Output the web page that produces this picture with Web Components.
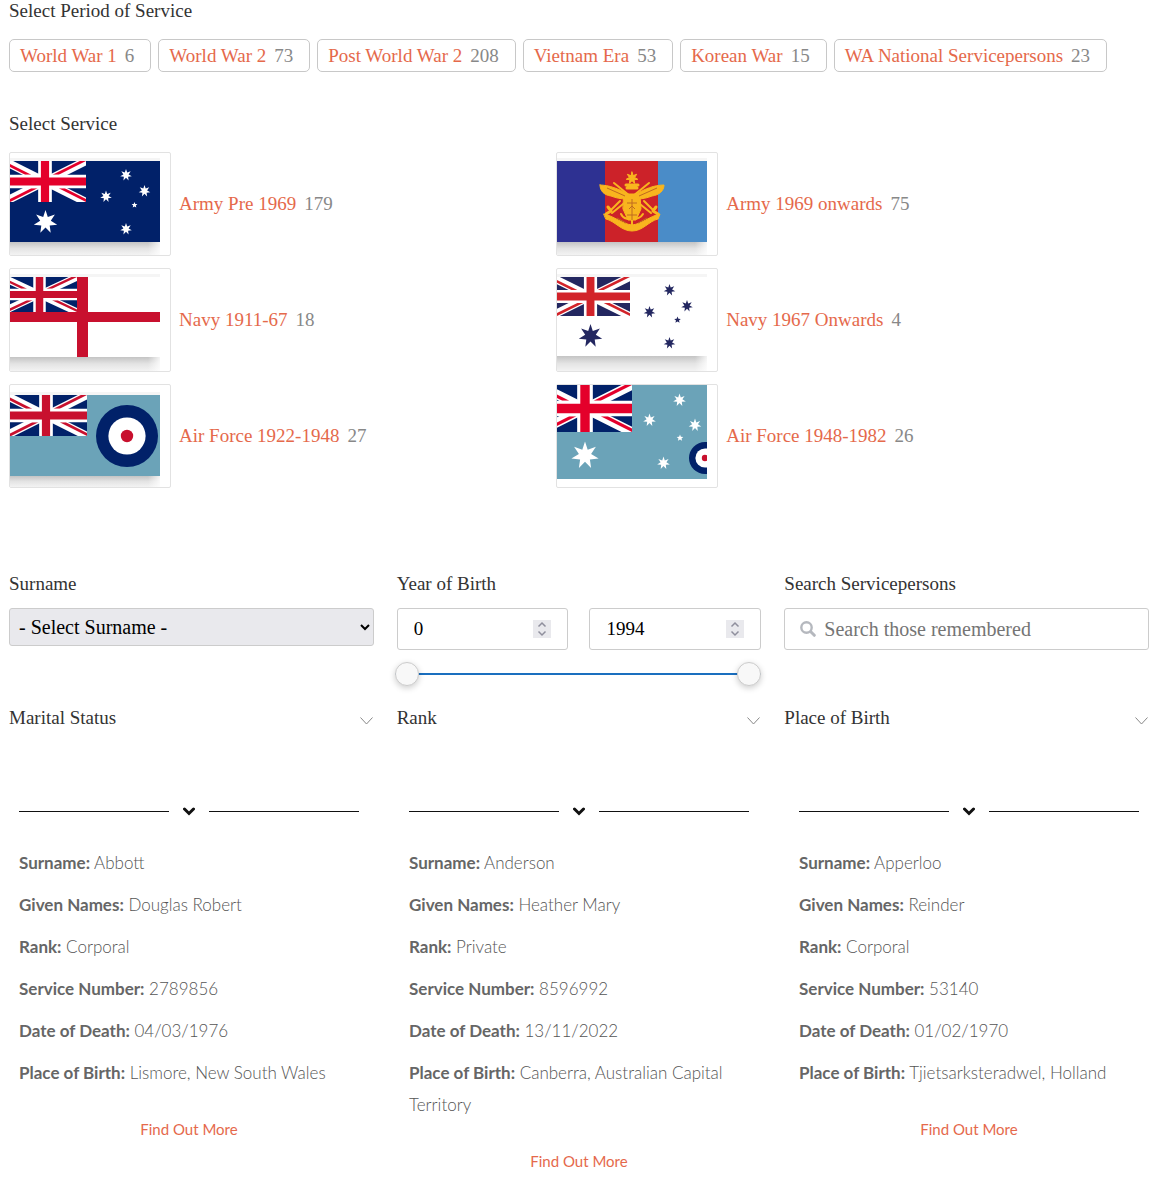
<!DOCTYPE html>
<html lang="en">
<head>
  <meta charset="utf-8">
  <meta name="viewport" content="width=device-width, initial-scale=1">
  <title>Servicepersons</title>
  <style>
    body {
      margin: 0 13px 0 9px;
      background: #fff;
      color: #333;
      font-family: "Liberation Serif", serif;
      font-size: 19px;
      line-height: 22px;
    }
  </style>
</head>
<body>
  <roll-page></roll-page>

  <script>
    // points of a star with its first point straight up
    function star (cx, cy, r, points = 7, inner = 0.45) {
      const list = []
      for (let i = 0; i < points * 2; i++) {
        const radius = i % 2 ? r * inner : r
        const angle = Math.PI * i / points - Math.PI / 2
        list.push(`${(cx + radius * Math.cos(angle)).toFixed(1)},${(cy + radius * Math.sin(angle)).toFixed(1)}`)
      }
      return `<polygon points="${list.join(' ')}"/>`
    }

    function unionJack (x, y, width, height, blue, red) {
      return `
        <svg x="${x}" y="${y}" width="${width}" height="${height}" viewBox="0 0 60 30" preserveAspectRatio="none">
          <path fill="${blue}" d="M0 0h60v30H0z"/>
          <path stroke="#fff" stroke-width="6" d="M0 0l60 30M60 0L0 30"/>
          <path fill="${red}" d="M0 0l20 10h-4.500L0 2.200zM60 0L40 10h-4.500L55.500 0zM0 30l20-10h4.500L4.500 30zM60 30L40 20h4.500L60 27.800z"/>
          <path stroke="#fff" stroke-width="10" d="M30 0v30M0 15h60"/>
          <path stroke="${red}" stroke-width="6" d="M30 0v30M0 15h60"/>
        </svg>`
    }

    function roundel (cx, cy, r) {
      return `
        <circle cx="${cx}" cy="${cy}" r="${r}" fill="#012169"/>
        <circle cx="${cx}" cy="${cy}" r="${r * 0.6}" fill="#fff"/>
        <circle cx="${cx}" cy="${cy}" r="${r * 0.2}" fill="#c8102e"/>`
    }

    const emblem = `
      <g fill="#f9b51e" stroke="#f9b51e" stroke-linecap="round" stroke-linejoin="round">
        ${star(75, 25, 6)}
        <path stroke-width="3" d="M69 32h12M70 35h10"/>
        <path fill="none" stroke-width="2" d="M57 30l37 30M92 30L55 60"/>
        <path stroke-width="1" d="M43 32c9 0 19 4 28 9h8c9-5 18-9 28-9c0 6-5 10-12 11c-5 2-10 3-15 3l-5 5l-5-5c-6 0-11-1-16-3c-7-1-11-5-11-11z"/>
        <path stroke-width="1" d="M67 43h16l1 13l-5 11h-8l-5-11z"/>
        <path fill="none" stroke-width="2" d="M75 44v29M64 61c3 7 18 7 22 0M63 48l-10 10M87 48l10 10"/>
        <path stroke-width="1" d="M47 61c10 2 18 10 28 11c10-1 18-9 28-11l-2 5c-9 2-15 12-26 12s-17-10-26-12z"/>
        <path fill="none" stroke-width="3" d="M51 54l3 4l-5 3M99 54l-3 4l5 3"/>
      </g>
      <path fill="none" stroke="#bf6a20" stroke-width="1" d="M50 35l18 8M100 35l-18 8M70 50h10M72 56l3-3l3 3M70 62h10M75 46v21M60 65l9 5M90 65l-9 5"/>`

    const flags = {
      'army-1901': {
        top: 8,
        bottom: 89,
        art: `<path fill="#012169" d="M0 8h150v81H0z"/>
          ${unionJack(-6, 8, 82, 41, '#012169', '#e4002b')}
          <g fill="#fff">${star(35.5, 69, 12)}${star(116, 22, 6)}${star(96, 43.5, 6)}${star(134.5, 38, 6)}${star(116, 76, 6)}${star(124.5, 52, 3, 5)}</g>`
      },
      'army-1969': {
        top: 8,
        bottom: 89,
        art: `<path fill="#2e3192" d="M0 8h48v81H0z"/>
          <path fill="#cc2229" d="M48 8h53v81H48z"/>
          <path fill="#4a8cc8" d="M101 8h49v81h-49z"/>
          ${emblem}`
      },
      'navy-1911': {
        top: 8,
        bottom: 88,
        art: `<path fill="#fff" d="M0 8h150v80H0z"/>
          ${unionJack(-8, 8, 75, 35, '#012169', '#c8102e')}
          <path fill="#c8102e" d="M67 8h11v35h72v10H78v35H67V53H0V43h67z"/>`
      },
      'navy-1967': {
        top: 8,
        bottom: 87,
        art: `<path fill="#fff" d="M0 8h150v79H0z"/>
          ${unionJack(-6, 8, 79, 39, '#232760', '#d2232a')}
          <g fill="#232760">${star(33.5, 67, 12)}${star(112.5, 21, 6)}${star(130, 37, 6)}${star(92.5, 43, 6)}${star(112.5, 74, 6)}${star(120.5, 51, 3.5, 5)}</g>`
      },
      'air-1922': {
        top: 10,
        bottom: 91,
        art: `<path fill="#6ba3b8" d="M0 10h150v81H0z"/>
          ${unionJack(-5, 10, 82, 41, '#012169', '#c8102e')}
          ${roundel(117, 51, 31)}`
      },
      'air-1948': {
        top: 0,
        bottom: 0,
        art: `<path fill="#6ba3b8" d="M0 0h150v94H0z"/>
          ${unionJack(-19, 0, 94, 47, '#012169', '#e4002b')}
          <g fill="#fff">${star(28, 70.5, 14)}${star(122.5, 15, 6.5)}${star(92.5, 35, 6.5)}${star(138, 40, 6.5)}${star(106.5, 78, 6.5)}${star(123, 53, 3.5, 5)}</g>
          ${roundel(148, 73, 16)}`
      }
    }

    class ServiceFlag extends HTMLElement {
      constructor () {
        super()
        this.shadow = this.attachShadow({ mode: 'open' })
      }

      connectedCallback () {
        this.render()
      }

      render () {
        const flag = flags[this.getAttribute('name')]
        const shadow = flag.top
          ? `<path fill="#f5f5f5" d="M0 ${flag.top - 3}h150v3H0z"/>
             <path fill="url(#fade)" d="M0 ${flag.bottom}h150v${102 - flag.bottom}H0z"/>
             <path fill="url(#edge)" d="M138 ${flag.bottom}h12v${102 - flag.bottom}h-12z"/>`
          : ''

        this.shadow.innerHTML =
        /*html*/`
        <style>
          :host {
            display: block;
            flex: none;
            padding-right: 10px;
            border: 1px solid #e2e2e2;
            border-radius: 2px;
            background: #fff;
          }
          svg {
            display: block;
          }
        </style>
        <svg width="150" height="102" viewBox="0 0 150 102" fill="none" aria-hidden="true">
          <defs>
            <linearGradient id="fade" x2="0" y2="1">
              <stop stop-color="#c4c4c4"/>
              <stop offset=".5" stop-color="#e4e4e4"/>
              <stop offset="1" stop-color="#f3f3f3"/>
            </linearGradient>
            <linearGradient id="edge">
              <stop stop-color="#fff" stop-opacity="0"/>
              <stop offset="1" stop-color="#fff" stop-opacity=".8"/>
            </linearGradient>
          </defs>
          ${shadow}
          ${flag.art}
        </svg>
        `
      }
    }

    class FacetSection extends HTMLElement {
      constructor () {
        super()
        this.shadow = this.attachShadow({ mode: 'open' })
      }

      connectedCallback () {
        this.shadow.innerHTML =
        /*html*/`
        <style>
          :host {
            display: block;
          }
          h2 {
            margin: 0 0 17px;
            font: inherit;
          }
        </style>
        <h2>${this.getAttribute('heading')}</h2>
        <slot></slot>
        `
      }
    }

    class PeriodButton extends HTMLElement {
      constructor () {
        super()
        this.shadow = this.attachShadow({ mode: 'open' })
      }

      connectedCallback () {
        this.shadow.innerHTML =
        /*html*/`
        <style>
          :host {
            display: block;
          }
          button {
            display: flex;
            gap: 8px;
            height: 33px;
            padding: 0 16px 0 10px;
            align-items: center;
            border: 1px solid #c8c8c8;
            border-radius: 5px;
            background: #fff;
            color: #e5694b;
            font: inherit;
            white-space: nowrap;
            cursor: pointer;
          }
          .count {
            color: #888;
          }
        </style>
        <button type="button"><slot></slot><span class="count">${this.getAttribute('count')}</span></button>
        `
      }
    }

    class ServiceOption extends HTMLElement {
      constructor () {
        super()
        this.shadow = this.attachShadow({ mode: 'open' })
      }

      connectedCallback () {
        this.shadow.innerHTML =
        /*html*/`
        <style>
          :host {
            display: block;
          }
          button {
            display: flex;
            gap: 8px;
            padding: 0;
            align-items: center;
            border: 0;
            background: none;
            color: #e5694b;
            font: inherit;
            cursor: pointer;
          }
          .count {
            color: #888;
          }
        </style>
        <button type="button">
          <service-flag name="${this.getAttribute('flag')}"></service-flag>
          <slot></slot>
          <span class="count">${this.getAttribute('count')}</span>
        </button>
        `
      }
    }

    class SurnameSelect extends HTMLElement {
      constructor () {
        super()
        this.shadow = this.attachShadow({ mode: 'open' })
      }

      connectedCallback () {
        this.shadow.innerHTML =
        /*html*/`
        <style>
          :host {
            display: block;
          }
          label {
            display: block;
            margin-bottom: 13px;
          }
          select {
            display: block;
            box-sizing: border-box;
            width: 100%;
            height: 38px;
            padding: 0 5px;
            border: 1px solid #ccc;
            border-radius: 3px;
            background: #e9e9ed;
            color: #000;
            font: inherit;
            font-size: 20px;
          }
        </style>
        <label for="surname">Surname</label>
        <select id="surname">
          <option>- Select Surname -</option>
        </select>
        `
      }
    }

    class YearRange extends HTMLElement {
      constructor () {
        super()
        this.shadow = this.attachShadow({ mode: 'open' })
        this.min = 0
        this.max = 1994
      }

      connectedCallback () {
        this.render()
      }

      field (id, label, value) {
        return /*html*/`
          <div class="field">
            <input type="number" id="${id}" aria-label="${label}" min="${this.min}" max="${this.max}" value="${value}">
            <svg width="18" height="18" viewBox="0 0 18 18" fill="none" aria-hidden="true">
              <path fill="#e9e9ed" d="M0 0h18v18H0z"/>
              <path stroke="#8f8f9d" stroke-width="1.500" d="M5.500 6.500L9 3l3.500 3.500M5.500 11.500L9 15l3.500-3.500"/>
            </svg>
          </div>`
      }

      render () {
        this.shadow.innerHTML =
        /*html*/`
        <style>
          :host {
            display: block;
          }
          fieldset {
            min-width: 0;
            margin: 0;
            padding: 0;
            border: 0;
          }
          legend {
            margin-bottom: 13px;
            padding: 0;
          }
          .fields {
            display: grid;
            grid-template-columns: 1fr 1fr;
            gap: 21px;
          }
          .field {
            display: flex;
            box-sizing: border-box;
            min-width: 0;
            height: 42px;
            padding: 0 16px;
            align-items: center;
            border: 1px solid #ccc;
            border-radius: 3px;
          }
          .field svg {
            flex: none;
          }
          input[type="number"] {
            flex: 1;
            min-width: 0;
            padding: 0;
            border: 0;
            outline: 0;
            background: none;
            color: #000;
            font: inherit;
            appearance: textfield;
          }
          input[type="number"]::-webkit-inner-spin-button {
            appearance: none;
            margin: 0;
          }
          .slider {
            display: grid;
            height: 24px;
            margin: 12px 0 0 -2px;
            background: linear-gradient(#1a6fbf, #1a6fbf) center / 100% 2px no-repeat;
          }
          .slider input {
            grid-area: 1 / 1;
            width: 100%;
            height: 24px;
            margin: 0;
            appearance: none;
            background: none;
            pointer-events: none;
          }
          .slider input::-webkit-slider-thumb {
            appearance: none;
            box-sizing: border-box;
            width: 24px;
            height: 24px;
            border: 1px solid #ccc;
            border-radius: 50%;
            background: #f8f8f8;
            box-shadow: 0 2px 6px rgba(0, 0, 0, .2);
            pointer-events: auto;
          }
        </style>
        <fieldset>
          <legend>Year of Birth</legend>
          <div class="fields">
            ${this.field('from', 'From year', this.min)}
            ${this.field('to', 'To year', this.max)}
          </div>
          <div class="slider">
            <input type="range" aria-label="From year" min="${this.min}" max="${this.max}" value="${this.min}">
            <input type="range" aria-label="To year" min="${this.min}" max="${this.max}" value="${this.max}">
          </div>
        </fieldset>
        `
        // keep each number box and its thumb on the same value
        const numbers = this.shadow.querySelectorAll('input[type="number"]')
        const thumbs = this.shadow.querySelectorAll('input[type="range"]')
        thumbs.forEach((thumb, i) => {
          thumb.addEventListener('input', () => {
            numbers[i].value = thumb.value
          })
          numbers[i].addEventListener('input', () => {
            thumb.value = numbers[i].value
          })
        })
      }
    }

    class PersonSearch extends HTMLElement {
      constructor () {
        super()
        this.shadow = this.attachShadow({ mode: 'open' })
      }

      connectedCallback () {
        this.shadow.innerHTML =
        /*html*/`
        <style>
          :host {
            display: block;
          }
          label {
            display: block;
            margin-bottom: 13px;
          }
          .box {
            display: flex;
            gap: 8px;
            box-sizing: border-box;
            height: 42px;
            padding: 0 15px;
            align-items: center;
            border: 1px solid #ccc;
            border-radius: 3px;
          }
          svg {
            flex: none;
          }
          input {
            flex: 1;
            min-width: 0;
            padding: 0;
            border: 0;
            outline: 0;
            background: none;
            color: #000;
            font: inherit;
            font-size: 20px;
          }
          input::placeholder {
            color: #757575;
          }
        </style>
        <label for="search">Search Servicepersons</label>
        <div class="box">
          <svg width="16" height="16" viewBox="0 0 16 16" fill="none" stroke="#b5b8be" aria-hidden="true">
            <circle cx="6.500" cy="6.500" r="5.200" stroke-width="2.400"/>
            <path stroke-width="3" stroke-linecap="round" d="M10.800 10.800l3.500 3.500"/>
          </svg>
          <input type="text" id="search" placeholder="Search those remembered">
        </div>
        `
      }
    }

    class FacetToggle extends HTMLElement {
      constructor () {
        super()
        this.shadow = this.attachShadow({ mode: 'open' })
      }

      connectedCallback () {
        this.shadow.innerHTML =
        /*html*/`
        <style>
          :host {
            display: block;
          }
          button {
            display: flex;
            width: 100%;
            padding: 0;
            align-items: end;
            justify-content: space-between;
            border: 0;
            background: none;
            color: inherit;
            font: inherit;
            cursor: pointer;
          }
        </style>
        <button type="button" aria-expanded="false">
          <slot></slot>
          <svg width="14" height="14" viewBox="0 0 14 14" fill="none" stroke="#888" aria-hidden="true">
            <path d="M.5 2.500l6 6.500l6-6.500"/>
          </svg>
        </button>
        `
        const button = this.shadow.querySelector('button')
        button.addEventListener('click', () => {
          button.setAttribute('aria-expanded', button.getAttribute('aria-expanded') === 'false')
        })
      }
    }

    class PersonCard extends HTMLElement {
      constructor () {
        super()
        this.shadow = this.attachShadow({ mode: 'open' })
        this.person = {}
      }

      connectedCallback () {
        this.render()
      }

      render () {
        this.shadow.innerHTML =
        /*html*/`
        <style>
          :host {
            display: block;
            padding: 0 10px;
            color: #555;
            font-family: Lato, sans-serif;
            font-size: 17px;
            line-height: 32px;
          }
          .divider {
            display: grid;
            grid-template-columns: 1fr 12px 1fr;
            gap: 14px;
            height: 14px;
            margin-bottom: 29px;
            align-items: center;
          }
          .divider hr {
            width: 100%;
            margin: 0;
            border: 0;
            border-top: 1px solid #111;
          }
          p {
            margin: 0 0 10px;
            font-weight: 300;
          }
          b {
            color: #666;
            font-weight: 700;
          }
          a {
            display: block;
            width: fit-content;
            margin: 24px auto 0;
            color: #e5694b;
            font-size: 15px;
            text-decoration: none;
          }
        </style>
        <div class="divider">
          <hr>
          <svg width="12" height="12" viewBox="0 0 12 12" fill="none" stroke="#111" stroke-width="3" stroke-linecap="round" aria-hidden="true">
            <path d="M1.500 4L6 8.500L10.500 4"/>
          </svg>
          <hr>
        </div>
        ${Object.entries(this.person).map(([name, value]) => `<p><b>${name}:</b> ${value}</p>`).join('')}
        <a href="#">Find Out More</a>
        `
      }
    }

    class PersonList extends HTMLElement {
      constructor () {
        super()
        this.shadow = this.attachShadow({ mode: 'open' })
        this.people = [
          {
            'Surname': 'Abbott',
            'Given Names': 'Douglas Robert',
            'Rank': 'Corporal',
            'Service Number': '2789856',
            'Date of Death': '04/03/1976',
            'Place of Birth': 'Lismore, New South Wales'
          },
          {
            'Surname': 'Anderson',
            'Given Names': 'Heather Mary',
            'Rank': 'Private',
            'Service Number': '8596992',
            'Date of Death': '13/11/2022',
            'Place of Birth': 'Canberra, Australian Capital Territory'
          },
          {
            'Surname': 'Apperloo',
            'Given Names': 'Reinder',
            'Rank': 'Corporal',
            'Service Number': '53140',
            'Date of Death': '01/02/1970',
            'Place of Birth': 'Tjietsarksteradwel, Holland'
          }
        ]
      }

      connectedCallback () {
        this.shadow.innerHTML =
        /*html*/`
        <style>
          :host {
            display: grid;
            grid-template-columns: repeat(3, minmax(0, 1fr));
            gap: 30px;
          }
        </style>
        `
        this.people.forEach((person) => {
          const card = document.createElement('person-card')
          card.person = person
          this.shadow.appendChild(card)
        })
      }
    }

    class RollPage extends HTMLElement {
      constructor () {
        super()
        this.shadow = this.attachShadow({ mode: 'open' })
      }

      connectedCallback () {
        this.shadow.innerHTML =
        /*html*/`
        <style>
          :host {
            display: block;
          }
          .periods {
            display: flex;
            flex-wrap: wrap;
            gap: 7px;
            margin-bottom: 41px;
          }
          .services {
            display: grid;
            grid-template-columns: 48% 48%;
            row-gap: 12px;
            margin-bottom: 85px;
          }
          .filters {
            display: grid;
            grid-template-columns: repeat(3, minmax(0, 1fr));
            gap: 21px 23px;
            margin-bottom: 75px;
          }
        </style>
        <main>
          <facet-section heading="Select Period of Service">
            <div class="periods">
              <period-button count="6">World War 1</period-button>
              <period-button count="73">World War 2</period-button>
              <period-button count="208">Post World War 2</period-button>
              <period-button count="53">Vietnam Era</period-button>
              <period-button count="15">Korean War</period-button>
              <period-button count="23">WA National Servicepersons</period-button>
            </div>
          </facet-section>
          <facet-section heading="Select Service">
            <div class="services">
              <service-option flag="army-1901" count="179">Army Pre 1969</service-option>
              <service-option flag="army-1969" count="75">Army 1969 onwards</service-option>
              <service-option flag="navy-1911" count="18">Navy 1911-67</service-option>
              <service-option flag="navy-1967" count="4">Navy 1967 Onwards</service-option>
              <service-option flag="air-1922" count="27">Air Force 1922-1948</service-option>
              <service-option flag="air-1948" count="26">Air Force 1948-1982</service-option>
            </div>
          </facet-section>
          <div class="filters">
            <surname-select></surname-select>
            <year-range></year-range>
            <person-search></person-search>
            <facet-toggle>Marital Status</facet-toggle>
            <facet-toggle>Rank</facet-toggle>
            <facet-toggle>Place of Birth</facet-toggle>
          </div>
          <person-list></person-list>
        </main>
        `
      }
    }

    customElements.define('service-flag', ServiceFlag)
    customElements.define('facet-section', FacetSection)
    customElements.define('period-button', PeriodButton)
    customElements.define('service-option', ServiceOption)
    customElements.define('surname-select', SurnameSelect)
    customElements.define('year-range', YearRange)
    customElements.define('person-search', PersonSearch)
    customElements.define('facet-toggle', FacetToggle)
    customElements.define('person-card', PersonCard)
    customElements.define('person-list', PersonList)
    customElements.define('roll-page', RollPage)
  </script>
</body>
</html>
